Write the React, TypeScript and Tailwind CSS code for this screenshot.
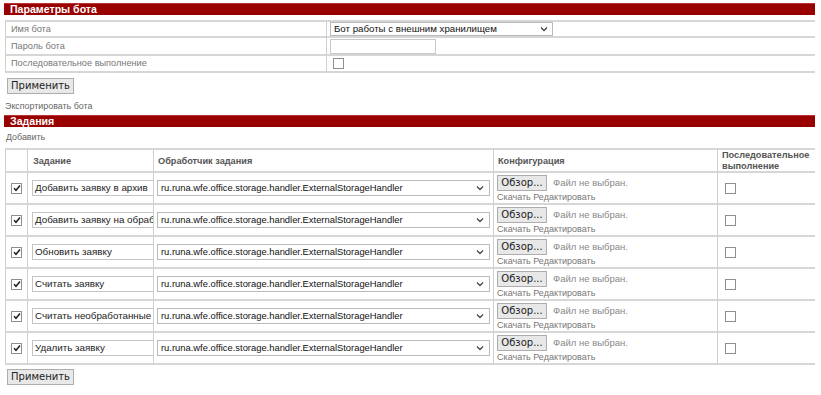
import React from "react";

const tasks = [
    "Добавить заявку в архив",
    "Добавить заявку на обработку",
    "Обновить заявку",
    "Считать заявку",
    "Считать необработанные заявки",
    "Удалить заявку",
];

const handler = "ru.runa.wfe.office.storage.handler.ExternalStorageHandler";

function Chevron() {
    return (
        <svg width="8" height="6" viewBox="0 0 8 6" className="shrink-0">
            <path d="M1 1.5 L4 4.5 L7 1.5" fill="none" stroke="#444" strokeWidth="1.3" />
        </svg>
    );
}

function Box({ checked }: { checked?: boolean }) {
    return (
        <span className="inline-flex h-[11px] w-[11px] items-center justify-center border border-[#8f8f8f] bg-white">
            {checked && (
                <svg width="8" height="8" viewBox="0 0 8 8">
                    <path d="M1 4.2 L3 6.2 L7 1.5" fill="none" stroke="#222" strokeWidth="1.6" />
                </svg>
            )}
        </span>
    );
}

function Bar({ title }: { title: string }) {
    return (
        <div className="h-[12px] bg-[#990000] border-t border-[#b33] pl-[6px] text-[10.6px] leading-[11px] font-bold text-white">
            {title}
        </div>
    );
}

function Btn({ label, className }: { label: string; className?: string }) {
    return (
        <button className={"h-[16px] border border-[#adadad] bg-[#e8e8e8] text-[10px] leading-[14px] text-[#222] font-['DejaVu_Sans',sans-serif] whitespace-nowrap " + (className ?? "")}>
            {label}
        </button>
    );
}

const cell = "border-r border-b-2 border-[#d6d6d6] border-r-[#cfcfcf]";

export default function App() {
    return (
        <div className="w-[821px] h-[395px] bg-white font-['Liberation_Sans',Arial,sans-serif] text-[11px] text-[#444] pt-[3px] pl-[4px] pr-[6px]">
            <Bar title="Параметры бота" />

            {/* Bot params */}
            <div className="mt-[5px] ml-[1px] grid grid-cols-[321px_1fr] border-l border-[#cfcfcf] border-t-2 border-t-[#d6d6d6] text-[9.2px]">
                <div className={"h-[16px] pl-[5px] leading-[14px] text-[#777] " + cell}>Имя бота</div>
                <div className="h-[16px] pl-[3px] border-b-2 border-[#d6d6d6]">
                    <div className="flex h-[14px] w-[223px] items-center justify-between border border-[#b9b9b9] pl-[3px] pr-[4px] text-[9.7px] text-[#111]">
                        <span>Бот работы с внешним хранилищем</span>
                        <Chevron />
                    </div>
                </div>
                <div className={"h-[18px] pl-[5px] leading-[16px] text-[#777] " + cell}>Пароль бота</div>
                <div className="h-[18px] pl-[3px] pt-[1px] border-b-2 border-[#d6d6d6]">
                    <div className="h-[15px] w-[106px] border border-[#c9c9c9]" />
                </div>
                <div className={"h-[17px] pl-[5px] leading-[15px] text-[#777] " + cell}>Последовательное выполнение</div>
                <div className="h-[17px] pl-[6px] pt-[2px] border-b-2 border-[#d6d6d6]">
                    <Box />
                </div>
            </div>

            <Btn label="Применить" className="mt-[5px] ml-[3px] w-[67px]" />

            <div className="mt-[6px] ml-[1px] text-[8.9px] leading-[12px] text-[#666]">Экспортировать бота</div>
            <div className="mt-[3px]">
                <Bar title="Задания" />
            </div>
            <div className="mt-[4px] ml-[2px] text-[8.9px] leading-[12px] text-[#666]">Добавить</div>

            {/* Tasks */}
            <div className="mt-[5px] ml-[1px] grid grid-cols-[22px_126px_340px_224px_1fr] border-l border-[#cfcfcf] border-t-2 border-t-[#d6d6d6]">
                <div className={"h-[23px] " + cell} />
                <div className={"h-[23px] pl-[5px] pt-[5px] font-bold text-[9.2px] text-[#555] " + cell}>Задание</div>
                <div className={"h-[23px] pl-[4px] pt-[5px] font-bold text-[9.2px] text-[#555] " + cell}>Обработчик задания</div>
                <div className={"h-[23px] pl-[4px] pt-[5px] font-bold text-[9.2px] text-[#555] " + cell}>Конфигурация</div>
                <div className="h-[23px] pl-[4px] font-bold text-[9.2px] leading-[11px] text-[#555] border-b-2 border-[#d6d6d6]">
                    Последовательное<br />выполнение
                </div>

                {tasks.map((t) => (
                    <React.Fragment key={t}>
                        <div className={"h-[32px] flex items-center justify-center " + cell}>
                            <Box checked />
                        </div>
                        <div className={"h-[32px] flex items-center overflow-hidden pl-[4px] " + cell}>
                            <div className="h-[16px] w-[121px] shrink-0 border-y border-l border-[#c4c4c4] pl-[2px] leading-[14px] text-[9.8px] text-[#222] whitespace-nowrap overflow-hidden">
                                {t}
                            </div>
                        </div>
                        <div className={"h-[32px] flex items-center pl-[3px] " + cell}>
                            <div className="flex h-[16px] w-[333px] items-center justify-between border border-[#b9b9b9] pl-[3px] pr-[5px] text-[9.4px] text-[#111]">
                                <span>{handler}</span>
                                <Chevron />
                            </div>
                        </div>
                        <div className={"h-[32px] pl-[3px] pt-[2px] " + cell}>
                            <div className="flex items-center gap-[6px]">
                                <Btn label="Обзор..." className="w-[50px] h-[16px]" />
                                <span className="text-[9.5px] text-[#888]">Файл не выбран.</span>
                            </div>
                            <div className="mt-[1px] text-[9px] leading-[11px] text-[#777]">Скачать Редактировать</div>
                        </div>
                        <div className="h-[32px] flex items-center pl-[7px] border-b-2 border-[#d6d6d6]">
                            <Box />
                        </div>
                    </React.Fragment>
                ))}
            </div>

            <Btn label="Применить" className="mt-[4px] ml-[3px] w-[67px]" />
        </div>
    );
}
